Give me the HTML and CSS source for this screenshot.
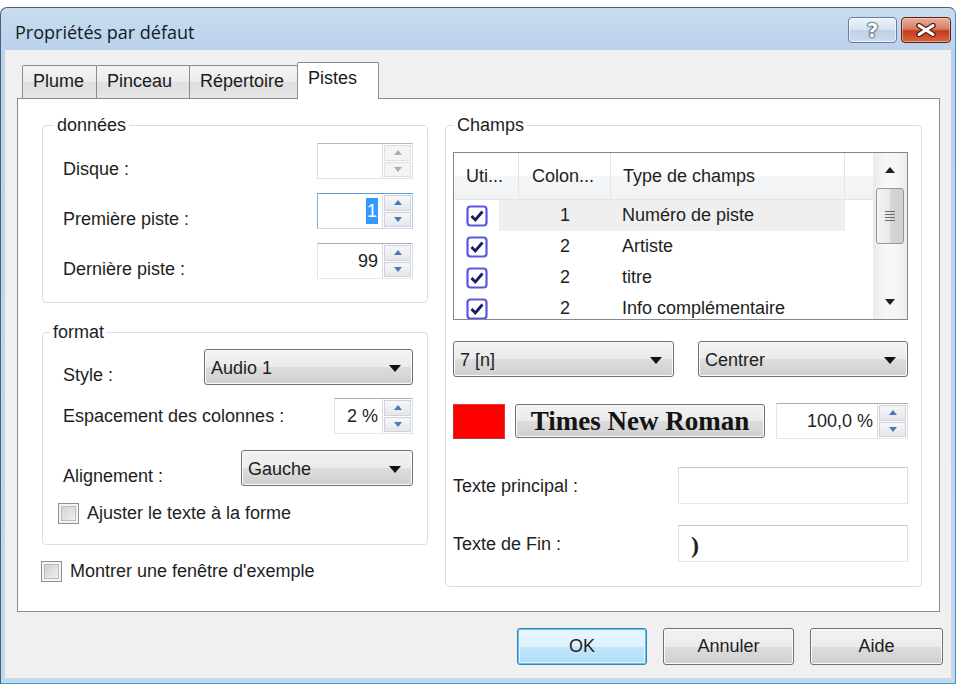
FILE: index.html
```html
<!DOCTYPE html>
<html lang="fr">
<head>
<meta charset="utf-8">
<title>Propriétés par défaut</title>
<link rel="stylesheet" href="styles.css">
</head>
<body>
<div class="window">
  <div class="titlebar">
    <span class="title">Propriétés par défaut</span>
    <div class="caption-btns">
      <div class="cap-btn help"><span>?</span></div>
      <div class="cap-btn close">
        <svg width="22" height="14" viewBox="0 0 22 14"><path d="M4 2.5 L18 11.5 M18 2.5 L4 11.5" stroke="#5a1c10" stroke-width="5.5" stroke-linecap="round"/><path d="M4 2.5 L18 11.5 M18 2.5 L4 11.5" stroke="#fff" stroke-width="3" stroke-linecap="round"/></svg>
      </div>
    </div>
  </div>
  <div class="client">
    <div class="tabs">
      <div class="tab t-plume">Plume</div>
      <div class="tab t-pinceau">Pinceau</div>
      <div class="tab t-rep">Répertoire</div>
      <div class="tab active">Pistes</div>
    </div>
    <div class="panel">
      <div class="col-left">
        <div class="group g-donnees">
          <div class="legend">données</div>
          <div class="rows r-donnees">
            <div class="row bottom">
              <span class="lbl">Disque :</span>
              <div class="spin disabled w96">
                <div class="spin-val"></div>
                <div class="spin-btns">
                  <div class="sb"><svg width="8" height="5" viewBox="0 0 8 5"><polygon points="0,5 8,5 4,0" fill="#a9afb6"/></svg></div>
                  <div class="sb"><svg width="8" height="5" viewBox="0 0 8 5"><polygon points="0,0 8,0 4,5" fill="#a9afb6"/></svg></div>
                </div>
              </div>
            </div>
            <div class="row bottom">
              <span class="lbl">Première piste :</span>
              <div class="spin focused w96">
                <div class="spin-val"><span class="txt-sel">1</span></div>
                <div class="spin-btns">
                  <div class="sb"><svg width="8" height="5" viewBox="0 0 8 5"><polygon points="0,5 8,5 4,0" fill="#4a78b8"/></svg></div>
                  <div class="sb"><svg width="8" height="5" viewBox="0 0 8 5"><polygon points="0,0 8,0 4,5" fill="#4a78b8"/></svg></div>
                </div>
              </div>
            </div>
            <div class="row bottom">
              <span class="lbl">Dernière piste :</span>
              <div class="spin w96">
                <div class="spin-val">99</div>
                <div class="spin-btns">
                  <div class="sb"><svg width="8" height="5" viewBox="0 0 8 5"><polygon points="0,5 8,5 4,0" fill="#4a78b8"/></svg></div>
                  <div class="sb"><svg width="8" height="5" viewBox="0 0 8 5"><polygon points="0,0 8,0 4,5" fill="#4a78b8"/></svg></div>
                </div>
              </div>
            </div>
          </div>
        </div>

        <div class="group g-format">
          <div class="legend">format</div>
          <div class="rows r-format">
            <div class="row bottom">
              <span class="lbl">Style :</span>
              <div class="combo w209"><span>Audio 1</span><svg width="12" height="7" viewBox="0 0 12 7"><polygon points="0,0 12,0 6,7" fill="#111"/></svg></div>
            </div>
            <div class="row center r-esp">
              <span class="lbl">Espacement des colonnes :</span>
              <div class="spin w79">
                <div class="spin-val">2 %</div>
                <div class="spin-btns">
                  <div class="sb"><svg width="8" height="5" viewBox="0 0 8 5"><polygon points="0,5 8,5 4,0" fill="#4a78b8"/></svg></div>
                  <div class="sb"><svg width="8" height="5" viewBox="0 0 8 5"><polygon points="0,0 8,0 4,5" fill="#4a78b8"/></svg></div>
                </div>
              </div>
            </div>
            <div class="row bottom r-align">
              <span class="lbl">Alignement :</span>
              <div class="combo w172"><span>Gauche</span><svg width="12" height="7" viewBox="0 0 12 7"><polygon points="0,0 12,0 6,7" fill="#111"/></svg></div>
            </div>
            <div class="check-row r-ajuster">
              <span class="cb"></span><span>Ajuster le texte à la forme</span>
            </div>
          </div>
        </div>

        <div class="check-row montrer">
          <span class="cb"></span><span>Montrer une fenêtre d'exemple</span>
        </div>
      </div>

      <div class="col-right">
        <div class="group g-champs">
          <div class="legend">Champs</div>
          <div class="listview">
            <div class="lv-main">
              <div class="lv-head">
                <div class="hc">Uti...</div>
                <div class="hc">Colon...</div>
                <div class="hc">Type de champs</div>
                <div class="hc"></div>
              </div>
              <div class="lv-row current">
                <div class="c-chk"><svg width="22" height="22" viewBox="0 0 22 22"><rect x="1.5" y="1.5" width="19" height="19" rx="3" fill="#fff" stroke="#5858e2" stroke-width="2.2"/><path d="M5.5 11 L9.3 15 L16.5 6.5" fill="none" stroke="#191a66" stroke-width="2.8"/></svg></div>
                <div class="c-num">1</div>
                <div class="c-txt">Numéro de piste</div>
                <div class="c-end"></div>
              </div>
              <div class="lv-row">
                <div class="c-chk"><svg width="22" height="22" viewBox="0 0 22 22"><rect x="1.5" y="1.5" width="19" height="19" rx="3" fill="#fff" stroke="#5858e2" stroke-width="2.2"/><path d="M5.5 11 L9.3 15 L16.5 6.5" fill="none" stroke="#191a66" stroke-width="2.8"/></svg></div>
                <div class="c-num">2</div>
                <div class="c-txt">Artiste</div>
                <div class="c-end"></div>
              </div>
              <div class="lv-row">
                <div class="c-chk"><svg width="22" height="22" viewBox="0 0 22 22"><rect x="1.5" y="1.5" width="19" height="19" rx="3" fill="#fff" stroke="#5858e2" stroke-width="2.2"/><path d="M5.5 11 L9.3 15 L16.5 6.5" fill="none" stroke="#191a66" stroke-width="2.8"/></svg></div>
                <div class="c-num">2</div>
                <div class="c-txt">titre</div>
                <div class="c-end"></div>
              </div>
              <div class="lv-row">
                <div class="c-chk"><svg width="22" height="22" viewBox="0 0 22 22"><rect x="1.5" y="1.5" width="19" height="19" rx="3" fill="#fff" stroke="#5858e2" stroke-width="2.2"/><path d="M5.5 11 L9.3 15 L16.5 6.5" fill="none" stroke="#191a66" stroke-width="2.8"/></svg></div>
                <div class="c-num">2</div>
                <div class="c-txt">Info complémentaire</div>
                <div class="c-end"></div>
              </div>
            </div>
            <div class="scrollbar">
              <div class="sb-arrow"><svg width="10" height="6" viewBox="0 0 10 6"><polygon points="0,6 10,6 5,0" fill="#222"/></svg></div>
              <div class="thumb"><svg width="10" height="12" viewBox="0 0 10 12"><path d="M0 1.5 H10 M0 4.5 H10 M0 7.5 H10 M0 10.5 H10" stroke="#6a6a6a" stroke-width="1.2"/></svg></div>
              <div class="track"></div>
              <div class="sb-arrow"><svg width="10" height="6" viewBox="0 0 10 6"><polygon points="0,0 10,0 5,6" fill="#222"/></svg></div>
            </div>
          </div>

          <div class="combos-row">
            <div class="combo w221"><span>7 [n]</span><svg width="12" height="7" viewBox="0 0 12 7"><polygon points="0,0 12,0 6,7" fill="#111"/></svg></div>
            <div class="combo w210"><span>Centrer</span><svg width="12" height="7" viewBox="0 0 12 7"><polygon points="0,0 12,0 6,7" fill="#111"/></svg></div>
          </div>

          <div class="color-row">
            <div class="swatch"></div>
            <div class="font-btn">Times New Roman</div>
            <div class="spin w132">
              <div class="spin-val">100,0 %</div>
              <div class="spin-btns">
                <div class="sb"><svg width="8" height="5" viewBox="0 0 8 5"><polygon points="0,5 8,5 4,0" fill="#4a78b8"/></svg></div>
                <div class="sb"><svg width="8" height="5" viewBox="0 0 8 5"><polygon points="0,0 8,0 4,5" fill="#4a78b8"/></svg></div>
              </div>
            </div>
          </div>

          <div class="text-row tr-principal">
            <span class="lbl">Texte principal :</span>
            <div class="textbox"></div>
          </div>
          <div class="text-row tr-fin">
            <span class="lbl">Texte de Fin :</span>
            <div class="textbox"><span class="paren">)</span></div>
          </div>
        </div>
      </div>
    </div>

    <div class="buttons">
      <div class="btn default">OK</div>
      <div class="btn w131">Annuler</div>
      <div class="btn w133">Aide</div>
    </div>
  </div>
</div>
</body>
</html>
```

FILE: styles.css
```css
body {
  margin: 0;
  background: #fff;
  font-family: "Liberation Sans", Arial, sans-serif;
  font-size: 18px;
  color: #1e1e1e;
}

.window {
  margin: 7px 0 0 0;
  width: 956px;
  height: 677px;
  box-sizing: border-box;
  border: 1px solid #4d5f75;
  border-right-color: #4a8fc4;
  border-bottom-color: #3ba3c9;
  border-radius: 7px 7px 0 0;
  background: linear-gradient(#c9dcf0, #bcd2eb 42px, #c3d7ed);
  padding: 0 4px 5px 4px;
  display: flex;
  flex-direction: column;
}

.titlebar {
  height: 42px;
  display: flex;
  justify-content: space-between;
  align-items: flex-start;
  flex-shrink: 0;
}

.title {
  font-family: "Open Sans", "Noto Sans", sans-serif;
  font-size: 18px;
  line-height: 24px;
  color: #0f1a26;
  padding: 12px 0 0 10px;
}

.caption-btns {
  display: flex;
  gap: 4px;
  margin-top: 9px;
}

.cap-btn {
  height: 26px;
  box-sizing: border-box;
  border-radius: 4px;
  display: flex;
  align-items: center;
  justify-content: center;
}

.help {
  width: 49px;
  border: 1px solid #6a7b92;
  background: linear-gradient(#edf3fa, #d6e3f2 48%, #bfd1e7 52%, #cddcee);
  box-shadow: inset 0 0 0 1px rgba(255,255,255,0.6);
}

.help span {
  font-family: "DejaVu Sans", sans-serif;
  font-weight: bold;
  font-size: 20px;
  line-height: 20px;
  color: #fff;
  text-shadow: 0 0 1px #34445a, 0 0 1px #34445a, 0 0 2px #34445a, 0 0 2px #34445a;
}

.close {
  width: 50px;
  border: 1px solid #5b2015;
  background: linear-gradient(#eab0a0, #d67c64 45%, #c23a1c 55%, #d9663f);
  box-shadow: inset 0 0 0 1px rgba(255,220,210,0.5);
}

.client {
  flex: 1;
  background: #f0f0f0;
  padding: 12px 11px 0 12px;
  display: flex;
  flex-direction: column;
  box-sizing: border-box;
}

/* Tabs */
.tabs {
  display: flex;
  align-items: flex-end;
  height: 37px;
  padding-left: 5px;
  margin-bottom: -1px;
  position: relative;
  z-index: 1;
}

.tab {
  height: 33px;
  box-sizing: border-box;
  margin-bottom: 1px;
  margin-right: -1px;
  border: 1px solid #898c95;
  border-bottom: none;
  border-radius: 2px 2px 0 0;
  background: linear-gradient(#f4f4f4, #ececec 50%, #dfdfdf 51%, #e6e6e6);
  line-height: 31px;
  padding: 0 10px;
  color: #1a1a1a;
}

.t-plume { width: 75px; }
.t-pinceau { width: 94px; }
.t-rep { width: 109px; }

.tab.active {
  height: 37px;
  margin-bottom: 0;
  width: 82px;
  background: #fff;
  line-height: 31px;
}

.panel {
  height: 514px;
  box-sizing: border-box;
  border: 1px solid #898c95;
  background: #fff;
  display: flex;
  gap: 17px;
  padding: 26px 17px 0 24px;
}

.col-left { width: 386px; }
.col-right { width: 477px; }

/* Groups */
.group {
  border: 1px solid #d5dfe5;
  border-radius: 4px;
  box-sizing: border-box;
}

.legend {
  display: block;
  width: max-content;
  margin-top: -11px;
  line-height: 20px;
  padding: 0 3px;
  background: #fff;
}

.g-donnees { padding: 0 14px 23px 20px; }
.g-donnees .legend { margin-left: -9px; }

.g-format {
  margin-top: 29px;
  padding: 0 14px 20px 20px;
}
.g-format .legend { margin-left: -13px; }

.g-champs { padding: 0 13px 24px 7px; }
.g-champs .legend { margin-left: 1px; }

.rows {
  display: flex;
  flex-direction: column;
}

.r-donnees { margin-top: 8px; gap: 14px; }
.r-format { margin-top: 7px; }
.r-esp { margin-top: 13px; }
.r-align { margin-top: 16px; }
.r-ajuster { margin-top: 16px; margin-left: -5px; }

.row {
  display: flex;
  justify-content: space-between;
  height: 36px;
}
.row.bottom { align-items: flex-end; }
.row.center { align-items: center; }

.lbl { line-height: 20px; }

/* Spin boxes */
.spin {
  display: flex;
  height: 36px;
  box-sizing: border-box;
  border: 1px solid;
  border-color: #abadb3 #dbdfe6 #e3e9ef #e2e3ea;
  background: #fff;
}
.spin.focused { border-color: #5c9ad8 #b4cde8 #c7dcf0 #7fb0e0; }
.spin.disabled { border-color: #b5b7bc #dadde2 #dfe2e6 #dadde2; }

.w96 { width: 96px; }
.w79 { width: 79px; }
.w132 { width: 132px; margin-left: auto; }

.spin-val {
  flex: 1;
  text-align: right;
  padding-right: 4px;
  line-height: 34px;
}

.txt-sel {
  background: #3399ff;
  color: #fff;
  padding: 3px 1px;
}

.spin-btns {
  width: 29px;
  display: flex;
  flex-direction: column;
  border-left: 1px solid #d9dbe0;
}

.sb {
  flex: 1;
  display: flex;
  align-items: center;
  justify-content: center;
  background: linear-gradient(#f6f7f9, #e4e7eb);
  border: 1px solid #cfd3d8;
  margin: 1px;
}
.sb + .sb { margin-top: 0; }
.disabled .sb { background: #f4f4f4; border-color: #e0e0e0; }

/* Combos & buttons */
.combo {
  height: 36px;
  box-sizing: border-box;
  display: flex;
  align-items: center;
  justify-content: space-between;
  padding: 2px 11px 0 6px;
  border: 1px solid #707070;
  border-radius: 3px;
  background: linear-gradient(#f2f2f2, #ebebeb 50%, #dddddd 51%, #cfcfcf);
  box-shadow: inset 0 0 0 1px #fbfbfb;
}
.w209 { width: 209px; }
.w172 { width: 172px; }
.w221 { width: 221px; }
.w210 { width: 210px; }

/* Check boxes */
.check-row {
  display: flex;
  align-items: center;
  gap: 8px;
  height: 22px;
}

.cb {
  width: 21px;
  height: 21px;
  box-sizing: border-box;
  border: 1px solid #8e8f8f;
  background: linear-gradient(135deg, #cbcbcb, #f5f5f5);
  box-shadow: inset 0 0 0 2px #f4f4f4, inset 0 0 0 3px #b9bdc2;
}

.montrer {
  margin-top: 15px;
  margin-left: -1px;
}

/* List view */
.listview {
  margin-top: 17px;
  height: 168px;
  box-sizing: border-box;
  border: 1px solid #828790;
  display: flex;
  overflow: hidden;
}

.lv-main {
  flex: 1;
  overflow: hidden;
}

.lv-head,
.lv-row {
  display: grid;
  grid-template-columns: 65px 92px 234px 1fr;
}

.lv-head {
  height: 47px;
  background: linear-gradient(#ffffff, #ffffff 50%, #f5f6f7 51%, #f1f2f4);
  border-bottom: 1px solid #e5e5e5;
  box-sizing: border-box;
}

.hc {
  line-height: 46px;
  padding-left: 12px;
  border-right: 1px solid #e3e4e6;
  white-space: nowrap;
  color: #1e1e1e;
}
.hc:nth-child(2) { padding-left: 13px; }
.hc:last-child { border-right: none; }

.lv-row {
  height: 31px;
  line-height: 31px;
}

.c-chk {
  display: flex;
  align-items: center;
  padding-left: 12px;
}

.c-num { text-align: center; }
.c-txt { padding-left: 11px; white-space: nowrap; }

.lv-row.current .c-chk { background: linear-gradient(to right, transparent 45px, #efefef 45px); }
.lv-row.current .c-num,
.lv-row.current .c-txt { background: #efefef; }

.scrollbar {
  width: 34px;
  display: flex;
  flex-direction: column;
  background: linear-gradient(to right, #e9e9e9, #f6f6f6 30%, #f6f6f6 70%, #ececec);
}

.sb-arrow {
  height: 34px;
  display: flex;
  align-items: center;
  justify-content: center;
}

.thumb {
  height: 56px;
  margin: 1px 3px 0 3px;
  box-sizing: border-box;
  border: 1px solid #979797;
  border-radius: 3px;
  background: linear-gradient(to right, #f4f4f4, #e8e8e8 50%, #d6d6d6 51%, #cfcfcf);
  display: flex;
  align-items: center;
  justify-content: center;
}

.track { flex: 1; }

/* Right column rows */
.combos-row {
  display: flex;
  justify-content: space-between;
  margin-top: 21px;
}

.color-row {
  display: flex;
  align-items: center;
  gap: 10px;
  margin-top: 26px;
  height: 36px;
}

.swatch {
  width: 52px;
  height: 35px;
  box-sizing: border-box;
  background: #ff0000;
  border: 1px solid #e33;
  border-left-color: #9d4141;
  border-bottom-color: #9d4141;
}

.font-btn {
  width: 250px;
  height: 34px;
  box-sizing: border-box;
  border: 1px solid #707070;
  border-radius: 3px;
  background: linear-gradient(#f2f2f2, #ebebeb 50%, #dddddd 51%, #cfcfcf);
  box-shadow: inset 0 0 0 1px #fbfbfb;
  font-family: "Liberation Serif", "Times New Roman", serif;
  font-weight: bold;
  font-size: 27px;
  line-height: 32px;
  text-align: center;
  color: #141414;
  white-space: nowrap;
}

.text-row {
  display: flex;
  justify-content: space-between;
  align-items: center;
  height: 37px;
}
.tr-principal { margin-top: 28px; }
.tr-fin { margin-top: 21px; }

.textbox {
  width: 230px;
  height: 37px;
  box-sizing: border-box;
  border: 1px solid;
  border-color: #c3c6cc #dcdfe4 #e3e6ea #dcdfe4;
  background: #fff;
  padding-left: 12px;
}

.paren {
  font-family: "Liberation Serif", serif;
  font-weight: bold;
  font-size: 24px;
  line-height: 38px;
}

/* Bottom buttons */
.buttons {
  display: flex;
  justify-content: flex-end;
  gap: 16px;
  margin: 16px -3px 0 0;
}

.btn {
  width: 130px;
  height: 37px;
  box-sizing: border-box;
  border: 1px solid #707070;
  border-radius: 3px;
  background: linear-gradient(#f2f2f2, #ebebeb 50%, #dddddd 51%, #cfcfcf);
  box-shadow: inset 0 0 0 1px #fbfbfb;
  text-align: center;
  line-height: 35px;
}
.btn.w131 { width: 131px; }
.btn.w133 { width: 133px; }

.btn.default {
  border-color: #3c7fb1;
  background: linear-gradient(#ebf6fd, #dcf0fc 50%, #c2e5f9 51%, #b0dcf5);
  box-shadow: inset 0 0 0 1px #5bc5f0, inset 0 0 0 2px #dff3fc;
}
```
